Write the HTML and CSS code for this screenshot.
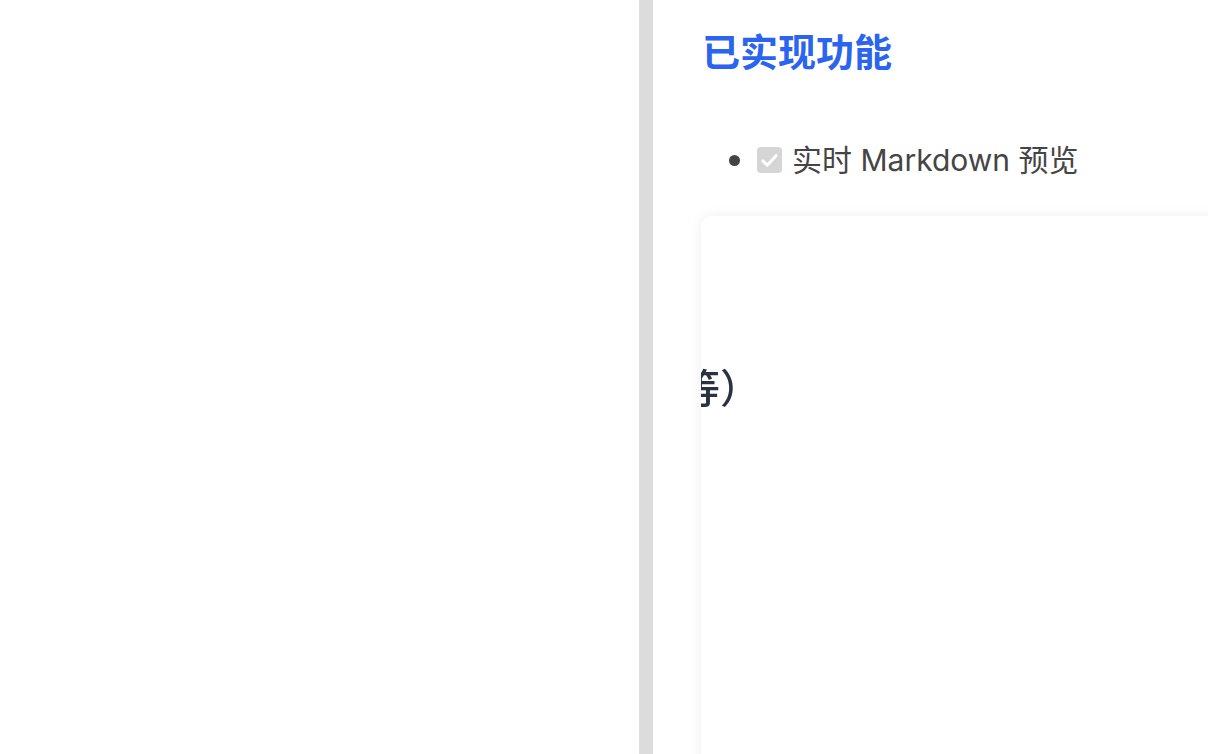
FILE: index.html
```html
<!DOCTYPE html>
<html lang="zh-CN">
<head>
<meta charset="utf-8">
<title>已实现功能</title>
<link rel="stylesheet" href="styles.css">
</head>
<body>
<div class="app">
  <section class="editor"></section>
  <div class="divider"></div>
  <section class="preview">
    <h2 class="title">已实现功能</h2>
    <ul class="tasks">
      <li class="task">
        <span class="dot"></span>
        <span class="check"><svg viewBox="0 0 24 24" width="21" height="21"><path d="M4.5 12.5l5 5 10-11" fill="none" stroke="#fff" stroke-width="3.4" stroke-linecap="round" stroke-linejoin="round"/></svg></span>
        <span class="label">实时 Markdown 预览</span>
      </li>
    </ul>
    <div class="card">
      <div class="shot">等）</div>
    </div>
  </section>
</div>
</body>
</html>
```
FILE: styles.css
```css
html, body {
  margin: 0;
  padding: 0;
  height: 100%;
  overflow: hidden;
  background: #fff;
}
.app {
  display: flex;
  height: 754px;
  font-family: "Noto Sans CJK SC", "Liberation Sans", sans-serif;
}
.editor {
  width: 639px;
  flex: none;
  background: #fff;
}
.divider {
  width: 14px;
  flex: none;
  background: #dcdcdc;
}
.preview {
  flex: 1;
  min-width: 0;
  padding: 31px 0 0 49px;
  overflow: hidden;
}
.title {
  margin: 0;
  font-size: 38px;
  line-height: 38px;
  font-weight: 700;
  color: #2a64ef;
  white-space: nowrap;
}
.tasks {
  list-style: none;
  margin: 71px 0 0;
  padding: 0 0 0 27px;
}
.task {
  display: flex;
  align-items: center;
  height: 40px;
  color: #454545;
  font-size: 29px;
  white-space: nowrap;
}
.dot {
  width: 11px;
  height: 11px;
  border-radius: 50%;
  background: #444;
  flex: none;
}
.check {
  width: 25px;
  height: 26px;
  margin-left: 17px;
  border-radius: 4px;
  background: #d5d5d5;
  display: flex;
  align-items: center;
  justify-content: center;
  flex: none;
}
.label {
  margin-left: 10px;
  line-height: 40px;
  font-family: Inter, "Noto Sans CJK SC", sans-serif;
  font-size: 30px;
}
.card {
  margin: 36px 0 0 -1px;
  width: 700px;
  height: 600px;
  background: #fff;
  border-radius: 10px;
  box-shadow: 0 0 14px rgba(0, 0, 0, 0.07);
  overflow: hidden;
}
.shot {
  margin: 150px 0 0 -21px;
  font-size: 40px;
  line-height: 40px;
  font-weight: 500;
  color: #2b3242;
  white-space: nowrap;
  filter: blur(0.4px);
}
```
